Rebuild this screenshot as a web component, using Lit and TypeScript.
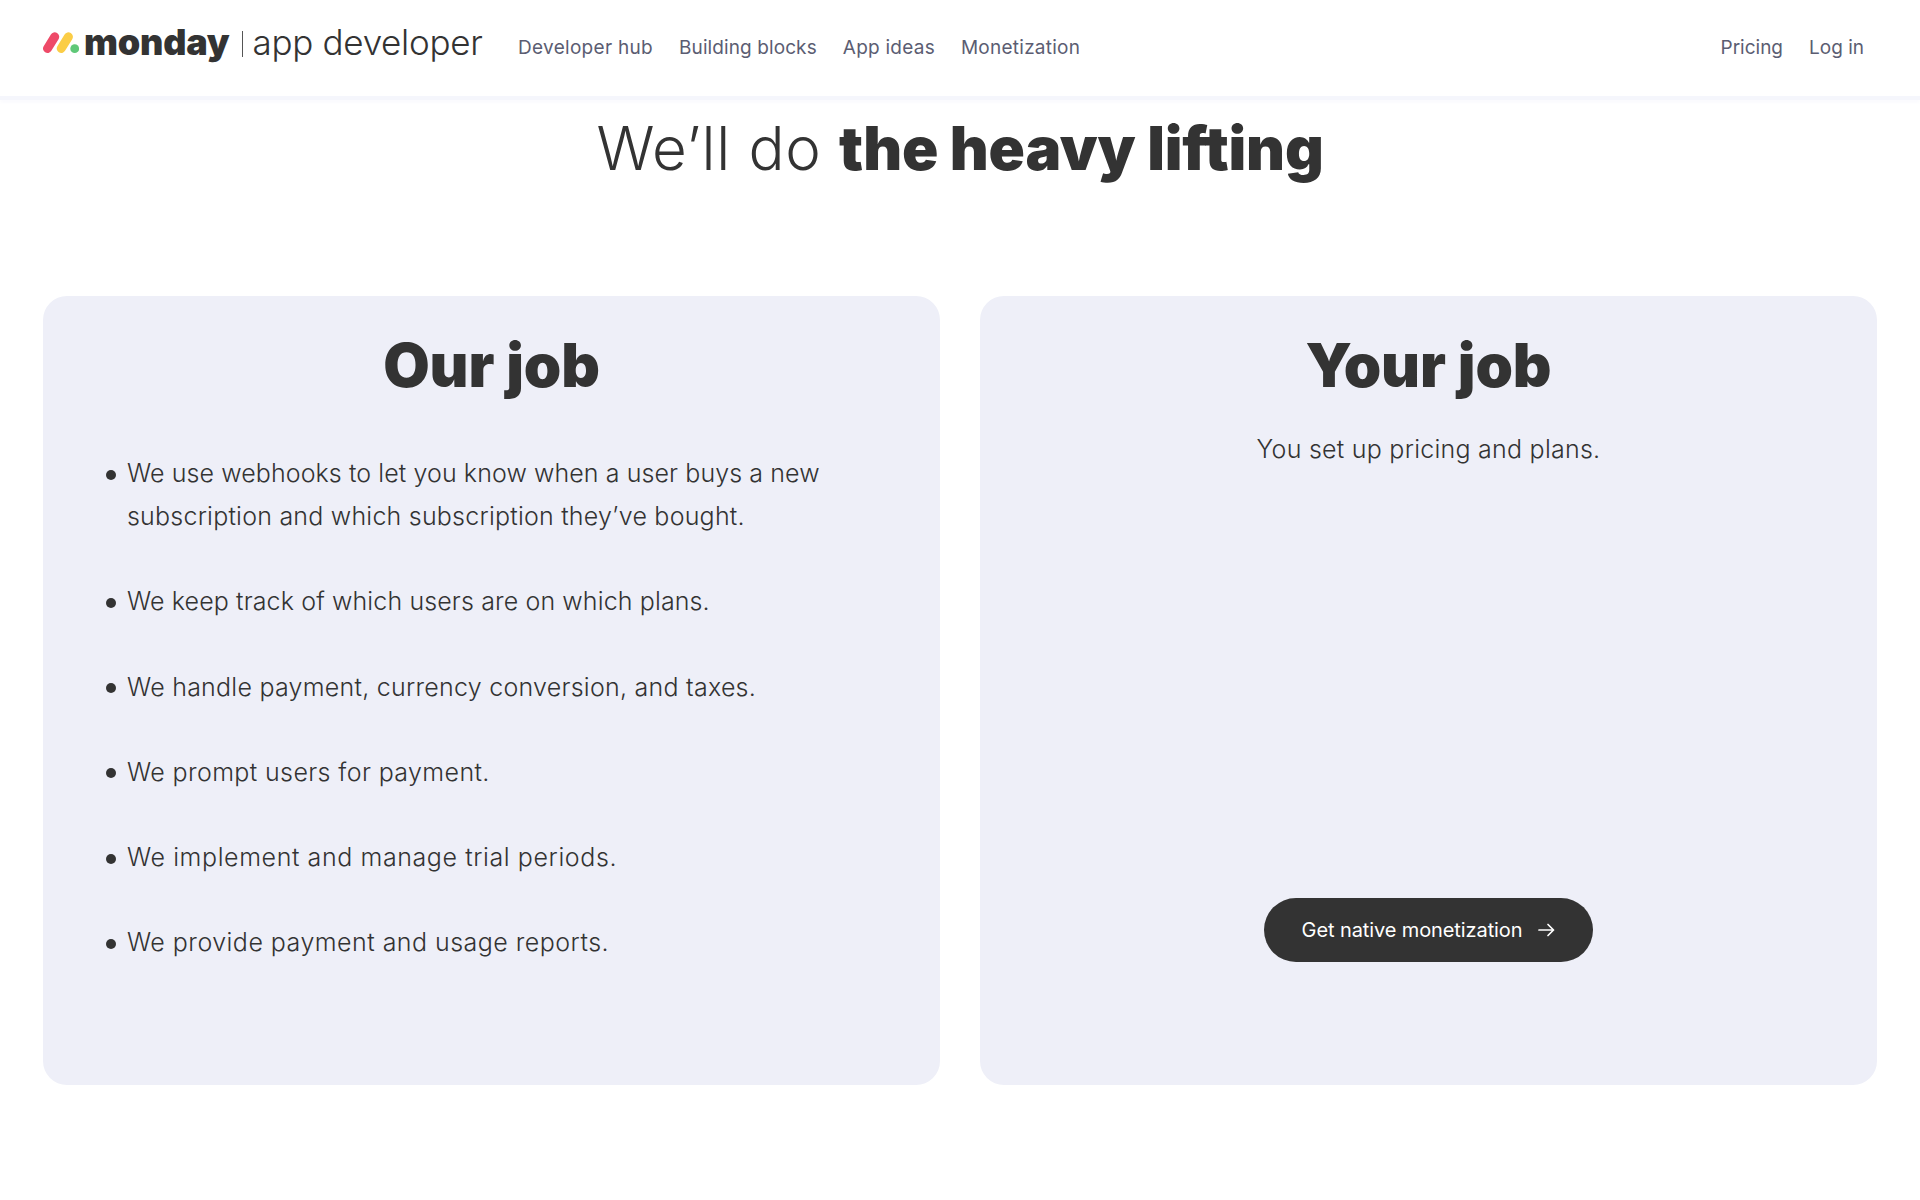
import { LitElement, html, css } from "lit";
import { customElement } from "lit/decorators.js";

@customElement("app-root")
export class AppRoot extends LitElement {
  static styles = css`
    :host { display: block; width: 1920px; height: 1200px; background: #fff; font-family: Inter, "Open Sans", "Liberation Sans", sans-serif; color: #333; overflow: hidden; }
    * { box-sizing: border-box; }
    header { height: 100px; display: flex; align-items: center; padding: 0 56px 0 43px; background: #fff; border-bottom: 4px solid #f5f6fc; box-shadow: 0 3px 3px #fbfbfe; }
    .logo { display: flex; align-items: center; width: 475px; margin-top: -12px; }
    .mark { width: 36px; height: 22px; margin: 2px 5px 0 0; flex: none; }
    .monday { font-size: 36px; font-weight: 900; letter-spacing: -0.2px; color: #333; line-height: 40px; }
    .sep { width: 1px; height: 26px; background: #555; margin: 4px 10px 0 12px; flex: none; }
    .dev { font-size: 35px; font-weight: 300; letter-spacing: -0.3px; color: #333; line-height: 40px; }
    nav { display: flex; gap: 26px; font-size: 19px; font-weight: 400; color: #5b5d72; margin-top: -1px; }
    nav.right { margin-left: auto; }
    nav span { letter-spacing: 0.25px; }
    nav span:nth-child(1) { letter-spacing: 0.3px; }
    nav span:nth-child(2) { letter-spacing: 0.1px; }
    nav.right span { letter-spacing: 0; }
    h1 { margin: 11px 0 0; height: 74px; text-align: center; font-size: 60px; line-height: 74px; font-weight: 300; letter-spacing: 0.7px; color: #333; white-space: nowrap; }
    h1 b { font-weight: 900; letter-spacing: -0.2px; }
    .cards { display: grid; grid-template-columns: 897px 897px; gap: 40px; margin: 111px 0 0 43px; }
    .card { height: 789px; background: #eeeff8; border-radius: 24px; display: flex; flex-direction: column; align-items: center; padding-top: 27px; }
    h2 { margin: 0; font-size: 60px; line-height: 84px; font-weight: 900; letter-spacing: -0.1px; color: #333; text-align: center; }
    ul { margin: 45px 0 0; padding: 0 0 0 84px; align-self: stretch; list-style: none; }
    li { position: relative; font-size: 25px; line-height: 43px; font-weight: 300; margin-bottom: 42.3px; color: #333; max-width: 760px; }
    li::before { content: ""; position: absolute; left: -21px; top: 17.5px; width: 10px; height: 10px; border-radius: 50%; background: #333; }
    li:nth-child(1) { letter-spacing: 0.22px; }
    li:nth-child(1) .first { letter-spacing: 0.09px; }
    li:nth-child(2) { letter-spacing: 0.12px; }
    li:nth-child(3) { letter-spacing: 0.25px; }
    li:nth-child(4) { letter-spacing: 0.38px; }
    li:nth-child(5) { letter-spacing: 0.59px; }
    li:nth-child(6) { letter-spacing: 0.47px; }
    .sub { margin: 21px 0 0; font-size: 25px; line-height: 43px; font-weight: 300; letter-spacing: 0.25px; }
    .btn { margin-top: 427px; width: 329px; height: 64px; border-radius: 32px; background: #333; color: #fff; display: flex; align-items: center; justify-content: center; gap: 16px; font-size: 20px; font-weight: 400; letter-spacing: -0.1px; }
    .btn svg { width: 17px; height: 14px; flex: none; }
  `;

  render() {
    const items = [
      html`<span class="first">We use webhooks to let you know when a user buys a new</span><br />subscription and which subscription they’ve bought.`,
      "We keep track of which users are on which plans.",
      "We handle payment, currency conversion, and taxes.",
      "We prompt users for payment.",
      "We implement and manage trial periods.",
      "We provide payment and usage reports.",
    ];
    return html`
      <header>
        <div class="logo">
          <svg class="mark" viewBox="0 0 36 22">
            <line x1="4.5" y1="16.5" x2="11.7" y2="4.8" stroke="#ee4a68" stroke-width="9" stroke-linecap="round" />
            <line x1="18.2" y1="16.5" x2="25.4" y2="4.8" stroke="#fbcd46" stroke-width="9" stroke-linecap="round" />
            <circle cx="31.7" cy="16.7" r="4.4" fill="#5fc878" />
          </svg>
          <span class="monday">monday</span>
          <span class="sep"></span>
          <span class="dev">app developer</span>
        </div>
        <nav>
          <span>Developer hub</span><span>Building blocks</span><span>App ideas</span><span>Monetization</span>
        </nav>
        <nav class="right"><span>Pricing</span><span>Log in</span></nav>
      </header>
      <h1>We’ll do <b>the heavy lifting</b></h1>
      <section class="cards">
        <article class="card">
          <h2>Our job</h2>
          <ul>${items.map((i) => html`<li>${i}</li>`)}</ul>
        </article>
        <article class="card">
          <h2>Your job</h2>
          <p class="sub">You set up pricing and plans.</p>
          <div class="btn">
            <span>Get native monetization</span>
            <svg viewBox="0 0 17 14" fill="none" stroke="#fff" stroke-width="1.7" stroke-linecap="round" stroke-linejoin="round">
              <path d="M1 7h14.5M10 1.5 15.5 7 10 12.5" />
            </svg>
          </div>
        </article>
      </section>
    `;
  }
}
